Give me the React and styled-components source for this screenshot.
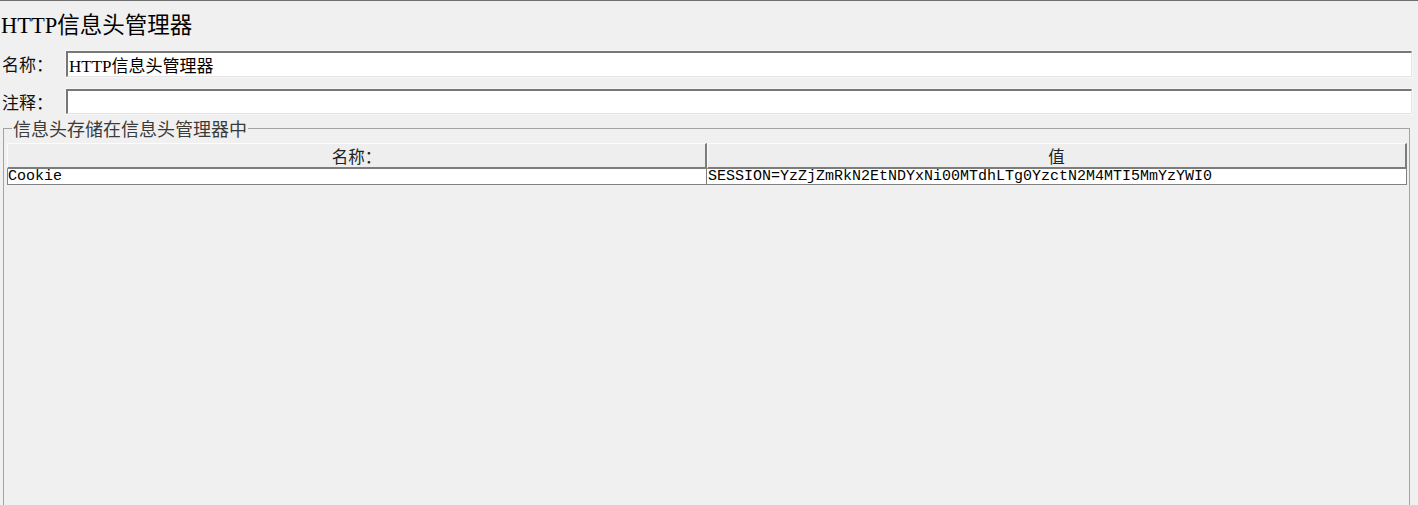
import React from "react";
import styled, { createGlobalStyle } from "styled-components";

const GlobalStyle = createGlobalStyle`
  html, body {
    margin: 0;
    padding: 0;
    background: #f0f0f0;
    overflow: hidden;
  }
  body {
    font-family: "Liberation Serif", "Noto Sans CJK SC", serif;
    color: #000;
  }
`;

const Page = styled.div`
  width: 1418px;
  height: 505px;
  border-top: 1px solid #6e6e6e;
  box-sizing: border-box;
  display: flex;
  flex-direction: column;
`;

const Title = styled.h1`
  margin: 13px 0 0 1px;
  font-family: "Liberation Serif", "Noto Sans CJK SC", serif;
  font-weight: normal;
  font-size: 22.5px;
  line-height: 24px;
  height: 24px;
`;

const Form = styled.div`
  display: flex;
  flex-direction: column;
  gap: 12px;
  margin-top: 13px;
`;

const FieldRow = styled.div`
  display: flex;
  align-items: center;
  height: ${(p) => p.$h}px;
`;

const Label = styled.label`
  width: 66px;
  padding-left: 2px;
  box-sizing: border-box;
  font-family: "Noto Sans CJK SC", sans-serif;
  font-size: 17px;
  line-height: 20px;
  color: #111;
`;

const Input = styled.input`
  width: 1346px;
  height: 100%;
  box-sizing: border-box;
  margin: 0;
  padding: 0 0 0 1px;
  background: #fff;
  border-top: 2px solid #777;
  border-left: 2px solid #777;
  border-right: 1px solid #e4e4e4;
  border-bottom: 1px solid #e4e4e4;
  outline: 1px solid #f6f6f6;
  font-family: "Liberation Serif", "Noto Sans CJK SC", serif;
  font-size: 17px;
  color: #000;
`;

const Group = styled.fieldset`
  margin: 5px 8px 0 3px;
  padding: 6px 2px 0 3px;
  border: 1px solid #a3a3a3;
  min-height: 400px;
  min-width: 0;
`;

const Legend = styled.legend`
  margin-left: 5px;
  padding: 0 1px;
  font-family: "Noto Sans CJK SC", sans-serif;
  font-size: 18px;
  line-height: 18px;
  color: #3b3b3b;
`;

const Grid = styled.div`
  display: grid;
  grid-template-columns: 1fr 1fr;
`;

const HeaderCell = styled.div`
  height: 26px;
  box-sizing: border-box;
  background: #eeeeee;
  border-top: 1px solid #fcfcfc;
  border-left: 1px solid #fcfcfc;
  border-right: 2px solid #7c7c7c;
  border-bottom: 2px solid #7c7c7c;
  display: flex;
  align-items: center;
  justify-content: center;
  font-family: "Noto Sans CJK SC", sans-serif;
  font-size: 16.5px;
  line-height: 20px;
  color: #222;
`;

const Cell = styled.div`
  height: 16px;
  box-sizing: border-box;
  background: #fff;
  border-right: 1px solid #808080;
  border-bottom: 1px solid #808080;
  border-left: ${(p) => (p.$first ? "1px solid #808080" : "none")};
  padding-left: ${(p) => (p.$first ? 0 : 1)}px;
  font-family: "Liberation Mono", "Noto Sans CJK SC", monospace;
  font-size: 15px;
  line-height: 16px;
  white-space: nowrap;
  overflow: hidden;
`;

const headers = [
  { name: "Cookie", value: "SESSION=YzZjZmRkN2EtNDYxNi00MTdhLTg0YzctN2M4MTI5MmYzYWI0" },
];

export default function App() {
  return (
    <Page>
      <GlobalStyle />
      <Title>HTTP信息头管理器</Title>
      <Form>
        <FieldRow $h={26}>
          <Label>名称：</Label>
          <Input defaultValue="HTTP信息头管理器" />
        </FieldRow>
        <FieldRow $h={25}>
          <Label>注释：</Label>
          <Input defaultValue="" />
        </FieldRow>
      </Form>
      <Group>
        <Legend>信息头存储在信息头管理器中</Legend>
        <Grid>
          <HeaderCell>名称：</HeaderCell>
          <HeaderCell>值</HeaderCell>
          {headers.map((h) => (
            <React.Fragment key={h.name}>
              <Cell $first>{h.name}</Cell>
              <Cell>{h.value}</Cell>
            </React.Fragment>
          ))}
        </Grid>
      </Group>
    </Page>
  );
}
